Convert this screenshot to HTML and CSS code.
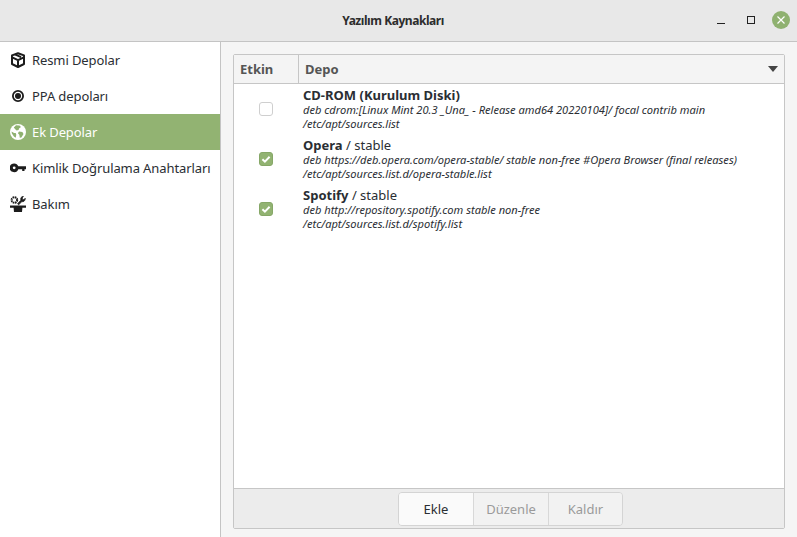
FILE: index.html
```html
<!DOCTYPE html>
<html lang="tr">
<head>
<meta charset="utf-8">
<title>Yazılım Kaynakları</title>
<link rel="stylesheet" href="styles.css">
</head>
<body>
<div class="window">
  <header class="titlebar">
    <div class="title">Yazılım Kaynakları</div>
    <div class="controls">
      <svg class="ctl" width="10" height="10" viewBox="0 0 10 10"><rect x="1" y="8" width="8" height="1" fill="#222"/></svg>
      <svg class="ctl" width="10" height="10" viewBox="0 0 10 10"><rect x="1.5" y="1.5" width="7" height="7" fill="none" stroke="#222"/></svg>
      <svg class="close" width="18" height="18" viewBox="0 0 18 18"><circle cx="9" cy="9" r="9" fill="#8fb170"/><path d="M5.5 5.5l7 7M12.5 5.5l-7 7" stroke="#fff" stroke-width="1.2"/></svg>
    </div>
  </header>
  <div class="body">
    <nav class="sidebar">
      <div class="nav-item">
        <svg class="nav-icon" width="16" height="16" viewBox="0 0 16 16"><path d="M8 1.2L2 3.4v8.6L8 15l6-3V3.4z" fill="none" stroke="#1c1c1c" stroke-width="2" stroke-linejoin="round"/><path d="M2.2 5.4L8 8.2l5.8-2.8M8 8.2V15M5 2.4l6 2.8" fill="none" stroke="#1c1c1c" stroke-width="2"/></svg>
        <span>Resmi Depolar</span>
      </div>
      <div class="nav-item">
        <svg class="nav-icon" width="16" height="16" viewBox="0 0 16 16"><circle cx="8" cy="8" r="5.1" fill="none" stroke="#1c1c1c" stroke-width="1.8"/><circle cx="8" cy="8" r="3" fill="#1c1c1c"/></svg>
        <span>PPA depoları</span>
      </div>
      <div class="nav-item active">
        <svg class="nav-icon" width="16" height="16" viewBox="0 0 16 16"><circle cx="8" cy="8" r="8" fill="#fff"/><path d="M6 1.2L9.5 1.5 11 3 9 4.6 8.6 6 6.6 6.6 5 5 3.8 3.6zM9 7.5l3.4.6 1.1 2-2.1 3.4-1.6.2-.5-3-1.4-1.4zM1.5 7.5l2.6 1.4 1.6.2.6 1.6-.6 3-1.8-1.2-2-3z" fill="#8fb170"/></svg>
        <span>Ek Depolar</span>
      </div>
      <div class="nav-item">
        <svg class="nav-icon" width="16" height="16" viewBox="0 0 16 16"><path d="M4.2 3.4a4.4 4.4 0 0 1 4.1 2.9H16v2.9h-1.5V11h-2.3V9.2H8.3A4.4 4.4 0 1 1 4.2 3.4zm0 3a1.4 1.4 0 1 0 0 2.8 1.4 1.4 0 0 0 0-2.8z" fill="#1c1c1c" fill-rule="evenodd"/></svg>
        <span>Kimlik Doğrulama Anahtarları</span>
      </div>
      <div class="nav-item">
        <svg class="nav-icon" width="16" height="16" viewBox="0 0 16 16"><path d="M0 9.6h16v2.2h-3.6L12 16H4l-.4-4.2H0z" fill="#1c1c1c"/><circle cx="4.4" cy="4" r="2.8" fill="none" stroke="#1c1c1c" stroke-width="2" stroke-dasharray="1.6 .6"/><path d="M8.6 8.8L7.6 7.7l3.3-3.5c-.4-1.4-.1-2.7 1-3.4.5-.3 1-.4 1.5-.4L12.2 2l.3 1.4 1.4.3 1.3-1.4c.1 1.3-.4 2.5-1.5 3.1-.6.3-1.2.3-1.8.2z" fill="#1c1c1c" stroke="#1c1c1c" stroke-width=".8" stroke-linejoin="round"/></svg>
        <span>Bakım</span>
      </div>
    </nav>
    <main class="content">
      <section class="frame">
        <div class="thead">
          <div class="th th-check">Etkin</div>
          <div class="th th-repo">Depo<svg class="sort" width="10" height="6" viewBox="0 0 10 6"><path d="M0 0h10L5 6z" fill="#444"/></svg></div>
        </div>
        <div class="rows">
          <div class="row">
            <div class="cell-check"><span class="check"></span></div>
            <div class="cell-text">
              <div class="name"><b>CD-ROM (Kurulum Diski)</b></div>
              <div class="meta">deb cdrom:[Linux Mint 20.3 _Una_ - Release amd64 20220104]/ focal contrib main</div>
              <div class="meta">/etc/apt/sources.list</div>
            </div>
          </div>
          <div class="row">
            <div class="cell-check"><span class="check on"><svg width="14" height="14" viewBox="0 0 14 14"><path d="M3.4 7.2l2.5 2.4 4.7-4.8" fill="none" stroke="#fff" stroke-width="2"/></svg></span></div>
            <div class="cell-text">
              <div class="name"><b>Opera</b> / stable</div>
              <div class="meta">deb https://deb.opera.com/opera-stable/ stable non-free #Opera Browser (final releases)</div>
              <div class="meta">/etc/apt/sources.list.d/opera-stable.list</div>
            </div>
          </div>
          <div class="row">
            <div class="cell-check"><span class="check on"><svg width="14" height="14" viewBox="0 0 14 14"><path d="M3.4 7.2l2.5 2.4 4.7-4.8" fill="none" stroke="#fff" stroke-width="2"/></svg></span></div>
            <div class="cell-text">
              <div class="name"><b>Spotify</b> / stable</div>
              <div class="meta">deb http://repository.spotify.com stable non-free</div>
              <div class="meta">/etc/apt/sources.list.d/spotify.list</div>
            </div>
          </div>
        </div>
        <div class="toolbar">
          <div class="btn-group">
            <button class="btn btn-add">Ekle</button>
            <button class="btn btn-edit" disabled>Düzenle</button>
            <button class="btn btn-del" disabled>Kaldır</button>
          </div>
        </div>
      </section>
    </main>
  </div>
</div>
</body>
</html>
```
FILE: styles.css
```css
* { box-sizing: border-box; }
html, body { margin: 0; padding: 0; height: 100%; overflow: hidden; }
body { font-family: "Noto Sans", "Open Sans", sans-serif; font-size: 13px; color: #2a2e33; background: #f5f5f5; }
.window { width: 797px; height: 537px; display: flex; flex-direction: column; }
.titlebar { height: 42px; flex: none; background: #e8e8e8; border-bottom: 1px solid #c4c4c4; display: flex; align-items: center; justify-content: center; position: relative; padding-right: 11px; }
.title { font-weight: 700; font-size: 12px; letter-spacing: -0.45px; color: #2d2d2d; padding-bottom: 1px; }
.controls { position: absolute; right: 7px; top: 11px; display: flex; align-items: center; gap: 20px; height: 18px; }
.ctl { display: block; }
.close { display: block; margin-left: -4px; }
.body { flex: 1; display: flex; min-height: 0; }
.sidebar { width: 221px; flex: none; background: #fff; border-right: 1px solid #c4c4c4; }
.nav-item { height: 36px; display: flex; align-items: center; padding-left: 10px; gap: 6px; font-size: 13px; white-space: nowrap; letter-spacing: -0.1px; }
.nav-item.active { background: #92b372; color: #fff; }
.nav-icon { flex: none; display: block; }
.content { flex: 1; padding: 12px 12px 8px 12px; min-width: 0; }
.frame { height: 100%; border: 1px solid #c6c6c6; border-radius: 2px; display: flex; flex-direction: column; background: #fff; }
.thead { height: 29px; flex: none; display: flex; background: #f4f4f4; border-bottom: 1px solid #c6c6c6; font-weight: 700; font-size: 13px; color: #555; align-items: stretch; }
.th { display: flex; align-items: center; }
.th-check { width: 65px; padding-left: 6px; border-right: 1px solid #c6c6c6; }
.th-repo { flex: 1; padding: 0 6px 0 6px; justify-content: space-between; }
.sort { display: block; }
.rows { flex: 1; min-height: 0; padding-top: 4px; }
.row { height: 50px; display: flex; }
.cell-check { width: 65px; flex: none; display: flex; align-items: center; justify-content: center; padding: 0 2px 8px 0; }
.check { width: 14px; height: 14px; border: 1px solid #cfcfcf; border-radius: 3px; background: #fff; display: block; }
.check.on { background: #92b372; border-color: #86a767; }
.check svg { display: block; margin: -1px; }
.cell-text { padding-left: 4px; min-width: 0; }
.name { font-size: 13px; line-height: 15px; white-space: nowrap; }
.meta { font-size: 11.1px; line-height: 14px; font-style: italic; white-space: nowrap; }
.toolbar { height: 40px; flex: none; background: #ececec; border-top: 1px solid #c6c6c6; display: flex; justify-content: center; align-items: flex-start; padding: 3px 0 0 3px; }
.btn-group { display: flex; height: 34px; border: 1px solid #d4d4d4; border-radius: 4px; overflow: hidden; }
.btn { font: inherit; font-size: 13px; border: 0; background: #f2f2f2; margin: 0; padding: 0; color: #9a9a9a; height: 100%; }
.btn-add { width: 75px; background: #fafafa; color: #2a2e33; border-right: 1px solid #d8d8d8; }
.btn-edit { width: 75px; border-right: 1px solid #d8d8d8; }
.btn-del { width: 73px; }
```
